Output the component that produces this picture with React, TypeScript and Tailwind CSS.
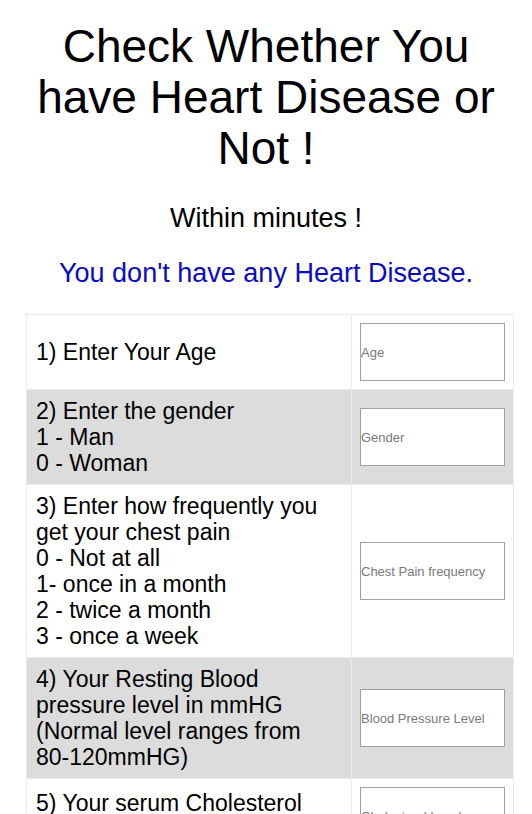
import React from "react";

const rows: { label: React.ReactNode[]; placeholder: string }[] = [
  { label: ["1) Enter Your Age"], placeholder: "Age" },
  { label: ["2) Enter the gender", "1 - Man", "0 - Woman"], placeholder: "Gender" },
  {
    label: [
      "3) Enter how frequently you get your chest pain",
      "0 - Not at all",
      "1- once in a month",
      "2 - twice a month",
      "3 - once a week",
    ],
    placeholder: "Chest Pain frequency",
  },
  {
    label: [
      "4) Your Resting Blood pressure level in mmHG",
      <>
        (Normal level ranges from <span className="whitespace-nowrap">80-120mmHG)</span>
      </>,
    ],
    placeholder: "Blood Pressure Level",
  },
  {
    label: ["5) Your serum Cholesterol level in mg/dl"],
    placeholder: "Cholesterol Level",
  },
];

export default function App() {
  return (
    <div className="min-h-screen bg-white font-['Liberation_Sans',Arial,sans-serif] text-black">
      <h1 className="pt-[21px] px-6 text-center text-[46px] leading-[51px]">
        Check Whether You have Heart Disease or Not !
      </h1>
      <p className="mt-[29px] text-center text-[27px] leading-[30px]">Within minutes !</p>
      <p className="mt-[25px] text-center text-[27px] leading-[30px] text-[#0b0bc4]">
        You don't have any Heart Disease.
      </p>

      <form className="mt-[26px] ml-[26px] w-[488px]">
        <table className="w-full border-collapse border border-[#ebebeb]">
          <tbody>
            {rows.map((row, i) => (
              <tr key={i} className={i % 2 === 1 ? "bg-[#dcdcdc]" : "bg-white"}>
                <td className="w-[325px] border border-[#ebebeb] px-[9px] py-[8px] text-[23px] leading-[26px] align-middle">
                  {row.label.map((line, j) => (
                    <div key={j}>{line}</div>
                  ))}
                </td>
                <td className="border border-[#ebebeb] px-[8px] py-[8px] align-middle">
                  <input
                    type="text"
                    placeholder={row.placeholder}
                    className="block h-[58px] w-[145px] border border-[#a0a0a0] bg-white px-0 text-[13px] text-black placeholder:text-[#7a7a7a] outline-none"
                  />
                </td>
              </tr>
            ))}
          </tbody>
        </table>
      </form>
    </div>
  );
}
